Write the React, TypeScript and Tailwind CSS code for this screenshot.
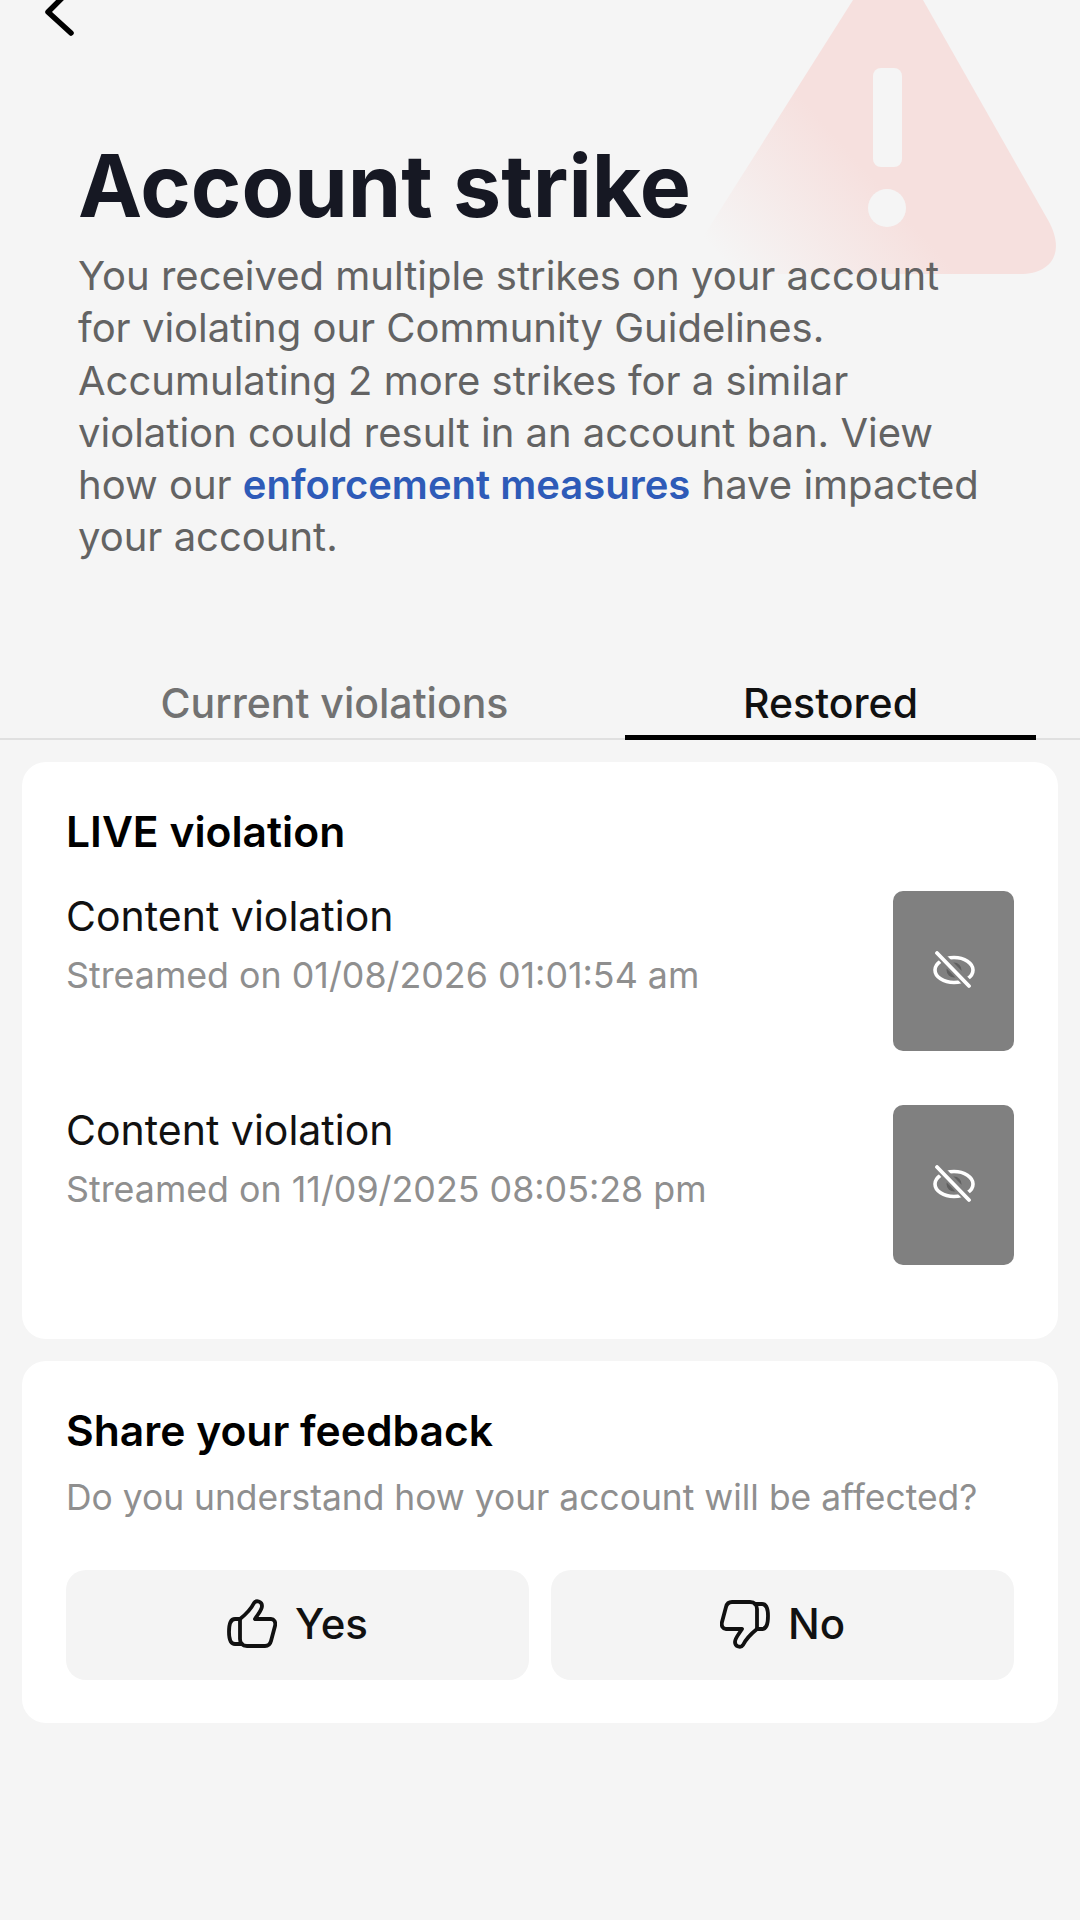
function ThumbIcon({ className }: { className?: string }) {
  return (
    <svg viewBox="0 0 50 50" className={className} fill="none" stroke="currentColor" strokeWidth="3.8" strokeLinejoin="round" strokeLinecap="round">
      <path d="M13 20 C18 16 24 10 27 4 C29 1 35 2 35 7 C35 11 31 15 28 20 L44 20 C47 20 49 23 48 27 L44 42 C43 46 41 47 38 47 L20 47 C15 47 13 44 13 40 Z" />
      <path d="M13 20 L8 20 C4 20 2 24 2 33 C2 42 4 45 8 45 L15 45" />
    </svg>
  );
}

function HiddenThumb() {
  return (
    <div className="w-[121px] h-[160px] shrink-0 rounded-[10px] bg-[#808080] flex items-center justify-center">
      <svg viewBox="0 0 44 38" className="w-[44px] h-[38px] -mt-[2px]" fill="none" strokeLinecap="round">
        <ellipse cx="22" cy="19" rx="19" ry="12.5" stroke="#fff" strokeWidth="3.6" />
        <circle cx="22" cy="19" r="7.5" fill="#5f5f5f" />
        <path d="M6 2 L38 35" stroke="#808080" strokeWidth="9" />
        <path d="M5 2 L37 35" stroke="#fff" strokeWidth="3.8" />
      </svg>
    </div>
  );
}

function ViolationRow({ date }: { date: string }) {
  return (
    <div className="flex justify-between">
      <div>
        <p className="mt-[1px] text-[41px] leading-[48px] text-[#111]">Content violation</p>
        <p className="mt-[12px] text-[35.8px] leading-[46px] text-[#8f8f8f]">Streamed on {date}</p>
      </div>
      <HiddenThumb />
    </div>
  );
}

export default function App() {
  return (
    <div className="relative w-[1080px] h-[1920px] overflow-hidden bg-[#f5f5f5] font-['Inter',sans-serif]">
      {/* warning triangle behind the title */}
      <svg viewBox="640 0 440 300" className="absolute left-[640px] top-0 w-[440px] h-[300px]">
        <defs>
          <linearGradient id="fade" gradientUnits="userSpaceOnUse" x1="745" y1="285" x2="870" y2="175">
            <stop offset="0" stopColor="#f6e0de" stopOpacity="0" />
            <stop offset="1" stopColor="#f6e0de" />
          </linearGradient>
        </defs>
        <path d="M853 0 L923 0 L1048 220 C1066 252 1052 274 1020 274 L700 274 Q680 274 691 256 Z" fill="url(#fade)" />
        <rect x="873" y="68" width="29" height="99" rx="8" fill="#f5f5f5" />
        <circle cx="887" cy="208" r="19" fill="#f5f5f5" />
      </svg>

      <header className="relative">
        <svg viewBox="0 0 40 38" className="ml-[42px] w-[40px] h-[38px]" fill="none" stroke="#000" strokeWidth="5.5" strokeLinecap="round" strokeLinejoin="round">
          <path d="M26 -8 L6 12 L29 33" />
        </svg>
        <div className="px-[78px]">
          <h1 className="mt-[98px] text-[86px] leading-[100px] font-bold text-[#161823]">Account strike</h1>
          <p className="mt-[14px] text-[40px] leading-[52.3px] text-[#636363]">
            You received multiple strikes on your account for violating our Community Guidelines. Accumulating 2 more
            strikes for a similar violation could result in an account ban. View how our{" "}
            <span className="font-semibold text-[#2e5bb8]">enforcement measures</span> have impacted your account.
          </p>
        </div>
      </header>

      {/* tabs */}
      <div className="mt-[109px] flex h-[67px] border-b-2 border-[#e0e0e0] pl-[44px] text-[41px] font-medium">
        <div className="w-[581px] text-center text-[#727272]">Current violations</div>
        <div className="w-[411px] h-[67px] border-b-[5px] border-black text-center text-[#111]">Restored</div>
      </div>

      <div className="mx-[22px] mt-[22px] h-[577px] rounded-[24px] bg-white px-[44px] pt-[45px]">
        <h2 className="text-[42.6px] leading-[50px] font-semibold text-black">LIVE violation</h2>
        <div className="mt-[34px] flex flex-col gap-[54px]">
          <ViolationRow date="01/08/2026 01:01:54 am" />
          <ViolationRow date="11/09/2025 08:05:28 pm" />
        </div>
      </div>

      <div className="mx-[22px] mt-[22px] h-[362px] rounded-[24px] bg-white px-[44px] pt-[45px]">
        <h2 className="text-[42.6px] leading-[50px] font-semibold text-black">Share your feedback</h2>
        <p className="mt-[19px] text-[35.4px] leading-[46px] text-[#8f8f8f]">Do you understand how your account will be affected?</p>
        <div className="mt-[49px] grid grid-cols-2 gap-[22px]">
          <button className="flex h-[110px] items-center justify-center gap-[18px] rounded-[20px] bg-[#f4f4f4] pb-[2px] text-[42px] font-medium text-[#111]">
            <ThumbIcon className="w-[50px] h-[50px]" />
            Yes
          </button>
          <button className="flex h-[110px] items-center justify-center gap-[18px] rounded-[20px] bg-[#f4f4f4] pb-[2px] text-[42px] font-medium text-[#111]">
            <ThumbIcon className="w-[50px] h-[50px] rotate-180" />
            No
          </button>
        </div>
      </div>
    </div>
  );
}
